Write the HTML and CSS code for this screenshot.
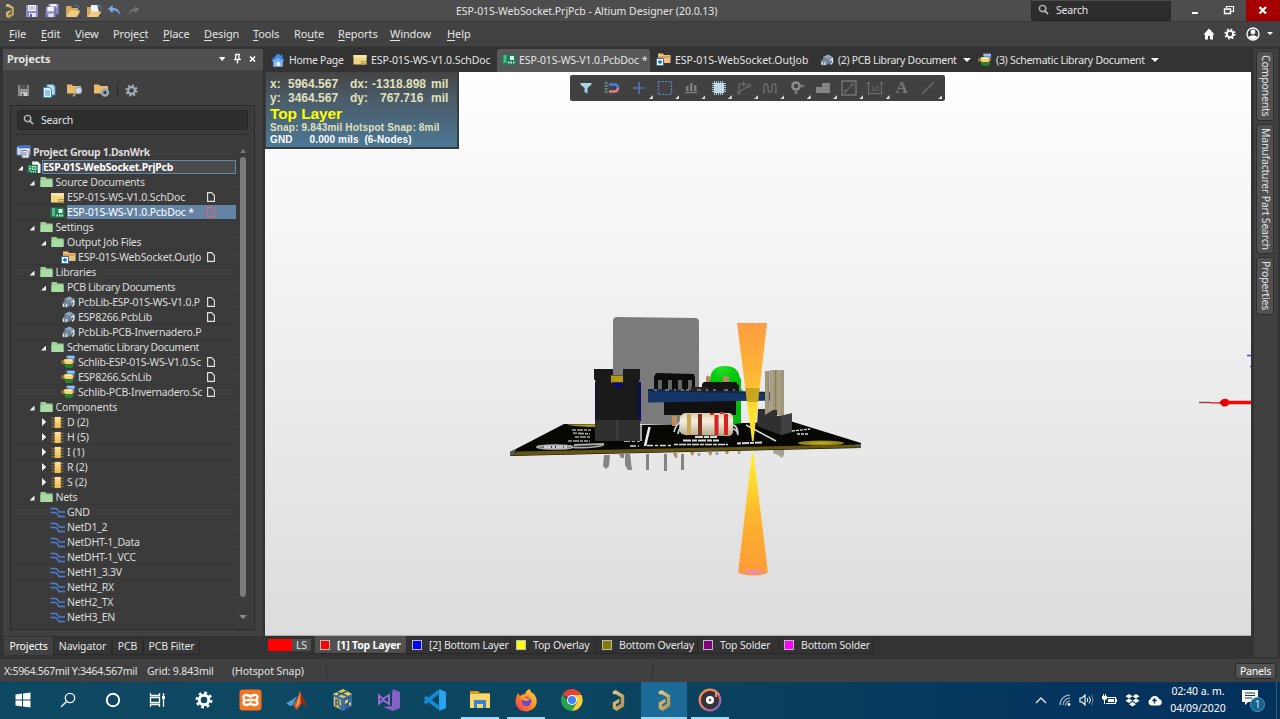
FILE: index.html
```html
<!DOCTYPE html>
<html lang="en">
<head>
<meta charset="utf-8">
<title>ESP-01S-WebSocket.PrjPcb - Altium Designer (20.0.13)</title>
<link rel="stylesheet" href="styles.css">
</head>
<body>
<svg class="sprite" width="0" height="0">
  <defs>
    <linearGradient id="gold" x1="0" y1="0" x2="1" y2="1"><stop offset="0" stop-color="#e8cf8e"/><stop offset="1" stop-color="#a98a4a"/></linearGradient>
    <linearGradient id="fox" x1="1" y1="0" x2="0" y2="1"><stop offset="0" stop-color="#ffe24a"/><stop offset=".5" stop-color="#ff8a1f"/><stop offset="1" stop-color="#f0305e"/></linearGradient>
    <linearGradient id="ring" x1="0" y1="0" x2="1" y2="1"><stop offset="0" stop-color="#ff9a3c"/><stop offset=".5" stop-color="#e8747c"/><stop offset="1" stop-color="#6a5be0"/></linearGradient>
    <linearGradient id="compfill" x1="0" y1="0" x2="0" y2="1"><stop offset="0" stop-color="#ffe3a0"/><stop offset="1" stop-color="#efb850"/></linearGradient>
  </defs>
  <symbol id="altium" viewBox="0 0 20 24"><path d="M4 5.500V2.500L7 1L16 6.500V18L8 23L4 20.500V14L11 10V14L7.500 16V18.500L12.500 15.500V8.500L7 5.500Z" fill="url(#gold)"/></symbol>
  <symbol id="save" viewBox="0 0 14 14"><path d="M1 1h12v12H1z" fill="#8d88c9"/><path d="M3 1h8v6H3z" fill="#f3f3fa"/><path d="M4 3h6M4 5h6" stroke="#a7a7bd"/><path d="M4 9h7v4H4z" fill="#e4e4f0"/><path d="M5 10h2v3H5z" fill="#5d58a0"/></symbol>
  <symbol id="savegray" viewBox="0 0 14 14"><path d="M1 1h12v12H1z" fill="#8a8a8a"/><path d="M3 1h8v5H3z" fill="#505050"/><path d="M3 6h8" stroke="#aaa"/><path d="M4 9h7v4H4z" fill="#d0d0d0"/><path d="M5 10h2v3H5z" fill="#555"/></symbol>
  <symbol id="saveall" viewBox="0 0 16 16"><path d="M4 1h11v11H4z" fill="#8d88c9"/><path d="M6 1h7v4H6z" fill="#eee"/><path d="M1 4h11v11H1z" fill="#8580c4" stroke="#55508e" stroke-width=".5"/><path d="M3 4h7v5H3z" fill="#f3f3fa"/><path d="M4 11h6v4H4z" fill="#ddd"/></symbol>
  <symbol id="open" viewBox="0 0 16 14"><path d="M1 2h5l1 2h6v3H4l-3 6z" fill="#d7aa5c"/><path d="M4.500 6.500H15.500L12 13H1z" fill="#f0cb82"/><path d="M9 2q4-2 5 2" stroke="#3d7ab0" fill="none" stroke-width="1.300"/></symbol>
  <symbol id="opendoc" viewBox="0 0 16 14"><path d="M1 3h5l1 2h6v3H4l-3 5z" fill="#d7aa5c"/><path d="M5 1h7v7H5z" fill="#eef4fa"/><path d="M4.500 7.500H15.500L12 13H1z" fill="#f0cb82"/><path d="M11 1q4 0 4 4" stroke="#3d7ab0" fill="none" stroke-width="1.300"/></symbol>
  <symbol id="undo" viewBox="0 0 16 14"><path d="M1 5L6 1V4Q13 4 14.500 12Q11 6.500 6 7V10Z" fill="#7ba4e4"/></symbol>
  <symbol id="redo" viewBox="0 0 16 14"><path d="M14 5L9 1V4Q3 4 1.500 11Q5 6.500 9 7V10Z" fill="#747474"/></symbol>
  <symbol id="mag" viewBox="0 0 12 12"><circle cx="5" cy="5" r="3.500" fill="none" stroke="currentColor" stroke-width="1.600"/><path d="M7.500 7.500L11 11" stroke="currentColor" stroke-width="1.800"/></symbol>
  <symbol id="gear" viewBox="0 0 16 16"><circle cx="8" cy="8" r="6.300" fill="none" stroke="currentColor" stroke-width="2.400" stroke-dasharray="2.470 2.470"/><circle cx="8" cy="8" r="4.200" fill="none" stroke="currentColor" stroke-width="2.600"/></symbol>
  <symbol id="copies" viewBox="0 0 14 14"><path d="M5 .5h6l2 2V11H5z" fill="#b9dcf3" stroke="#4a8fc4"/><path d="M1.500 3.500h6l2 2v8h-8z" fill="#e7f3fb" stroke="#3d86bf"/><path d="M3 7h5M3 9h5M3 11h5" stroke="#4a8fc4"/></symbol>
  <symbol id="foldmag" viewBox="0 0 16 14"><path d="M0 1h5l1 1.500h8V10H0z" fill="#e9ba69"/><circle cx="11.500" cy="7" r="3.200" fill="#c9dff0" stroke="#8fa9bd"/><path d="M9 9.500L6 13" stroke="#cfa05b" stroke-width="1.800"/></symbol>
  <symbol id="foldgear" viewBox="0 0 16 14"><path d="M0 1h5l1 1.500h8V10H0z" fill="#e9ba69"/><circle cx="11" cy="9" r="3" fill="#424242" stroke="#9aabb8" stroke-width="2.400"/></symbol>
  <symbol id="group" viewBox="0 0 15 14"><path d="M1 2h9v8H1z" fill="#dce9f7" stroke="#5b87c9"/><path d="M1 1h9v2H1z" fill="#5a86d8"/><path d="M4 1h10v9H4z" fill="#fff" stroke="#7d9cd0"/><path d="M4 .5h10v3H4z" fill="#3e70d8"/><path d="M6 5.500h5l2 2V13H6z" fill="#f2f6fb" stroke="#667"/><path d="M7 8h4M7 10h4" stroke="#67a"/></symbol>
  <symbol id="prj" viewBox="0 0 15 14"><path d="M5 .5h6l3 3V13H5z" fill="#f4f4f4"/><path d="M0 4h11v9H0z" fill="#148050"/><path d="M1.500 6h2M1.500 8h2M1.500 10h2M5 6h4v3H5z" stroke="#dff5ea" fill="none"/><path d="M4 11.500h6" stroke="#e9fff4" stroke-width="1.500" stroke-dasharray="1 1"/></symbol>
  <symbol id="folder" viewBox="0 0 13 12"><path d="M.5 1h5l1 1.500h6V11H.5z" fill="#9bcf96"/><path d="M.5 4h12v7H.5z" fill="#a9dca4"/></symbol>
  <symbol id="sch" viewBox="0 0 14 11"><path d="M.5 1h13v9.500H.5z" fill="#f1d583"/><path d="M.5 1h13v3H.5z" fill="#f8e4a4"/><path d="M8 7h5.500v3.500H8z" fill="#b99642"/><path d="M9 8.500h4" stroke="#f4dc95"/></symbol>
  <symbol id="pcb" viewBox="0 0 14 11"><path d="M0 .5h14v10H0z" fill="#14824f"/><path d="M1.500 2h3M1.500 4h3M1.500 6h3M1.500 8h3" stroke="#a4e3c4"/><path d="M8 2h4v4H8z" fill="#e9fff4"/><path d="M6 8.500h7" stroke="#d6f3e5" stroke-width="2" stroke-dasharray="1.500 1"/></symbol>
  <symbol id="outjob" viewBox="0 0 15 13"><path d="M2 .5h5l1 1.500h6.500v8H2z" fill="#efc180"/><path d="M2 3h12.500v2H2z" fill="#d99f52"/><path d="M.5 5.500h7v7h-7z" fill="#fff" stroke="#2c6fc0"/><path d="M4 7v4M2 9h4" stroke="#1b60b5" stroke-width="1.300"/></symbol>
  <symbol id="pcblib" viewBox="0 0 14 12"><path d="M3 3L8 .5L12.500 3V8L8 10.500L3 8z" fill="#6b8096"/><path d="M3 3L8 .5L12.500 3L8 5z" fill="#8ea6bb"/><path d="M1 6.500L5 5L7 7V11L3 11.500L1 10z" fill="#7a8b9b"/><path d="M9.500 6.500l3-2v4l-2 2M2 11V8M5 11V8" stroke="#e5ebef" stroke-width="1.200" fill="none"/></symbol>
  <symbol id="schlib" viewBox="0 0 14 14"><path d="M5 .5h8v5H9L5 3z" fill="#5c94e8"/><path d="M6 1h7v2H6z" fill="#9bc0f7"/><path d="M3 9h9v2l-2 2H5l-2-2z" fill="#287f33"/><path d="M3 4h7l2 2-1 3H4L2 7z" fill="#f5d26c"/><path d="M0 6h3M0 8h3M11 7h2" stroke="#c9a83e"/><path d="M4 5h6v1H4z" fill="#fff1b5"/></symbol>
  <symbol id="comp" viewBox="0 0 14 14"><path d="M.5 2.500h13M.5 5.500h13M.5 8.500h13M.5 11.500h13" stroke="#9b8636"/><path d="M4 1h6.500v12H4z" fill="url(#compfill)"/></symbol>
  <symbol id="net" viewBox="0 0 15 11"><path d="M.5 1.500H5Q7 1.500 8 3.500T10 5H15M.5 5.500H5Q7 5.500 8 8T10 9.500H15" stroke="#4f80d6" stroke-width="1.500" fill="none"/></symbol>
  <symbol id="doc" viewBox="0 0 8 10"><path d="M.6.6H4.500L7.400 3.500V9.400H.6z" fill="none" stroke="currentColor" stroke-width="1.100"/></symbol>
  <symbol id="home" viewBox="0 0 14 14"><path d="M2.500 7h9v6.500h-9z" fill="#e8f1fc"/><path d="M7 .5L.5 7l1 1.500L7 4l5.500 4.500 1-1.500-2-2V1.500H10V3z" fill="#3f8df0"/><path d="M2.500 8L7 4l4.500 4v5.500H9V9H5.500v4.500h-3z" fill="#78b2f6"/></symbol>
</svg>

<header class="titlebar">
  <div class="quick">
    <svg width="14" height="16"><use href="#altium"/></svg>
    <svg width="14" height="14"><use href="#save"/></svg>
    <svg width="16" height="15"><use href="#saveall"/></svg>
    <svg width="16" height="14"><use href="#open"/></svg>
    <svg width="16" height="14"><use href="#opendoc"/></svg>
    <svg width="15" height="13"><use href="#undo"/></svg>
    <svg width="14" height="12"><use href="#redo"/></svg>
  </div>
  <div class="title">ESP-01S-WebSocket.PrjPcb - Altium Designer (20.0.13)</div>
  <div class="top-search"><svg width="11" height="11"><use href="#mag"/></svg><span>Search</span></div>
  <div class="winctl">
    <svg width="32" height="21" viewBox="0 0 32 21"><path d="M10 13h6" stroke="#fff" stroke-width="2"/></svg>
    <svg width="32" height="21" viewBox="0 0 32 21"><path d="M12.500 8V6.500h7v5H17" fill="none" stroke="#fff" stroke-width="1.200"/><path d="M10.500 9h6v4.500h-6z" fill="none" stroke="#fff" stroke-width="1.400"/></svg>
    <div class="close"><svg width="34" height="21" viewBox="0 0 34 21"><path d="M13.500 7l6.500 6.500M20 7l-6.500 6.500" stroke="#fff" stroke-width="2.200"/></svg></div>
  </div>
</header>

<nav class="menubar">
  <div class="menus">
    <span class="m-file"><u>F</u>ile</span><span class="m-edit"><u>E</u>dit</span><span class="m-view"><u>V</u>iew</span><span class="m-project">Proje<u>c</u>t</span><span class="m-place"><u>P</u>lace</span><span class="m-design"><u>D</u>esign</span><span class="m-tools"><u>T</u>ools</span><span class="m-route">Ro<u>u</u>te</span><span class="m-reports"><u>R</u>eports</span><span class="m-window"><u>W</u>indow</span><span class="m-help"><u>H</u>elp</span>
  </div>
  <div class="menu-right">
    <svg width="12" height="12" viewBox="0 0 12 12"><path d="M6 .5L.5 6.500H2V11.500H5V8H7V11.500H10V6.500H11.500z" fill="#fff"/></svg>
    <svg class="white" width="12" height="12"><use href="#gear"/></svg>
    <svg width="14" height="14" viewBox="0 0 14 14"><circle cx="7" cy="7" r="6" fill="none" stroke="#fff" stroke-width="1.300"/><circle cx="7" cy="5" r="2.400" fill="#fff"/><path d="M2.500 10Q7 6.500 11.500 10Q7 14.500 2.500 10" fill="#fff"/></svg>
    <i class="caret small"></i>
  </div>
</nav>

<main class="workspace">
  <aside class="projects">
    <div class="panel">
      <div class="panel-head"><b>Projects</b>
        <svg width="40" height="12" viewBox="0 0 40 12"><path d="M2 4h6.500L5.200 8z" fill="#fff"/><path d="M18 1.500h5M18.700 1.500V6M22 1.500V6.500M17 6.500h7M20.500 7v3.500" stroke="#fff" stroke-width="1.300" fill="none"/><path d="M33 3.500l5 5M38 3.500l-5 5" stroke="#fff" stroke-width="1.700"/></svg>
      </div>
      <div class="panel-tools">
        <svg width="13" height="13"><use href="#savegray"/></svg>
        <svg width="14" height="14"><use href="#copies"/></svg>
        <svg width="16" height="15"><use href="#foldmag"/></svg>
        <svg width="16" height="15"><use href="#foldgear"/></svg>
        <i class="vsep"></i>
        <svg class="steel" width="13" height="13"><use href="#gear"/></svg>
      </div>
      <div class="tree-box">
        <div class="tree-search"><svg width="11" height="11"><use href="#mag"/></svg><span>Search</span></div>
        <div class="tree-wrap">
          <div class="tree">
            <div class="row l0"><svg class="ic" width="15" height="14"><use href="#group"/></svg><b class="lb">Project Group 1.DsnWrk</b></div>
            <div class="row l1 open"><svg class="ic" width="15" height="13"><use href="#prj"/></svg><b class="lb current">ESP-01S-WebSocket.PrjPcb</b></div>
            <div class="row l2 open"><svg class="ic" width="13" height="12"><use href="#folder"/></svg><span class="lb">Source Documents</span></div>
            <div class="row l3"><svg class="ic" width="14" height="11"><use href="#sch"/></svg><span class="lb wide">ESP-01S-WS-V1.0.SchDoc</span><svg class="doc" width="8" height="10"><use href="#doc"/></svg></div>
            <div class="row l3"><svg class="ic" width="14" height="11"><use href="#pcb"/></svg><span class="lb wide selected">ESP-01S-WS-V1.0.PcbDoc *</span><svg class="doc modified" width="8" height="10"><use href="#doc"/></svg></div>
            <div class="row l2 open"><svg class="ic" width="13" height="12"><use href="#folder"/></svg><span class="lb">Settings</span></div>
            <div class="row l3 open"><svg class="ic" width="13" height="12"><use href="#folder"/></svg><span class="lb">Output Job Files</span></div>
            <div class="row l4"><svg class="ic" width="14" height="13"><use href="#outjob"/></svg><span class="lb wide">ESP-01S-WebSocket.OutJo</span><svg class="doc" width="8" height="10"><use href="#doc"/></svg></div>
            <div class="row l2 open"><svg class="ic" width="13" height="12"><use href="#folder"/></svg><span class="lb">Libraries</span></div>
            <div class="row l3 open"><svg class="ic" width="13" height="12"><use href="#folder"/></svg><span class="lb tight">PCB Library Documents</span></div>
            <div class="row l4"><svg class="ic" width="14" height="12"><use href="#pcblib"/></svg><span class="lb">PcbLib-ESP-01S-WS-V1.0.P</span><svg class="doc" width="8" height="10"><use href="#doc"/></svg></div>
            <div class="row l4"><svg class="ic" width="14" height="12"><use href="#pcblib"/></svg><span class="lb">ESP8266.PcbLib</span><svg class="doc" width="8" height="10"><use href="#doc"/></svg></div>
            <div class="row l4"><svg class="ic" width="14" height="12"><use href="#pcblib"/></svg><span class="lb">PcbLib-PCB-Invernadero.Pc</span></div>
            <div class="row l3 open"><svg class="ic" width="13" height="12"><use href="#folder"/></svg><span class="lb tight">Schematic Library Document</span></div>
            <div class="row l4"><svg class="ic" width="13" height="14"><use href="#schlib"/></svg><span class="lb">Schlib-ESP-01S-WS-V1.0.Sc</span><svg class="doc" width="8" height="10"><use href="#doc"/></svg></div>
            <div class="row l4"><svg class="ic" width="13" height="14"><use href="#schlib"/></svg><span class="lb">ESP8266.SchLib</span><svg class="doc" width="8" height="10"><use href="#doc"/></svg></div>
            <div class="row l4"><svg class="ic" width="13" height="14"><use href="#schlib"/></svg><span class="lb">Schlib-PCB-Invernadero.Sc</span><svg class="doc" width="8" height="10"><use href="#doc"/></svg></div>
            <div class="row l2 open"><svg class="ic" width="13" height="12"><use href="#folder"/></svg><span class="lb wide">Components</span></div>
            <div class="row l3 shut"><svg class="ic" width="13" height="13"><use href="#comp"/></svg><span class="lb">D (2)</span></div>
            <div class="row l3 shut"><svg class="ic" width="13" height="13"><use href="#comp"/></svg><span class="lb">H (5)</span></div>
            <div class="row l3 shut"><svg class="ic" width="13" height="13"><use href="#comp"/></svg><span class="lb">I (1)</span></div>
            <div class="row l3 shut"><svg class="ic" width="13" height="13"><use href="#comp"/></svg><span class="lb">R (2)</span></div>
            <div class="row l3 shut"><svg class="ic" width="13" height="13"><use href="#comp"/></svg><span class="lb">S (2)</span></div>
            <div class="row l2 open"><svg class="ic" width="13" height="12"><use href="#folder"/></svg><span class="lb">Nets</span></div>
            <div class="row l3"><svg class="ic" width="15" height="11"><use href="#net"/></svg><span class="lb">GND</span></div>
            <div class="row l3"><svg class="ic" width="15" height="11"><use href="#net"/></svg><span class="lb">NetD1_2</span></div>
            <div class="row l3"><svg class="ic" width="15" height="11"><use href="#net"/></svg><span class="lb">NetDHT-1_Data</span></div>
            <div class="row l3"><svg class="ic" width="15" height="11"><use href="#net"/></svg><span class="lb">NetDHT-1_VCC</span></div>
            <div class="row l3"><svg class="ic" width="15" height="11"><use href="#net"/></svg><span class="lb">NetH1_3.3V</span></div>
            <div class="row l3"><svg class="ic" width="15" height="11"><use href="#net"/></svg><span class="lb">NetH2_RX</span></div>
            <div class="row l3"><svg class="ic" width="15" height="11"><use href="#net"/></svg><span class="lb">NetH2_TX</span></div>
            <div class="row l3"><svg class="ic" width="15" height="11"><use href="#net"/></svg><span class="lb">NetH3_EN</span></div>
          </div>
          <div class="scroll"><i class="up"></i><i class="thumb"></i><i class="down"></i></div>
        </div>
      </div>
    </div>
    <div class="panel-tabs"><span class="on p1">Projects</span><span class="p2">Navigator</span><span class="p3">PCB</span><span class="p4">PCB Filter</span></div>
  </aside>

  <section class="editor">
    <div class="doc-tabs">
      <div class="dt d1"><svg width="14" height="14"><use href="#home"/></svg><span>Home Page</span></div>
      <div class="dt d2"><svg width="14" height="11"><use href="#sch"/></svg><span>ESP-01S-WS-V1.0.SchDoc</span></div>
      <div class="dt d3 on"><svg width="14" height="11"><use href="#pcb"/></svg><span>ESP-01S-WS-V1.0.PcbDoc *</span></div>
      <div class="dt d4"><svg width="15" height="13"><use href="#outjob"/></svg><span>ESP-01S-WebSocket.OutJob</span></div>
      <div class="dt d5"><svg width="14" height="12"><use href="#pcblib"/></svg><span>(2) PCB Library Document</span><i class="caret"></i></div>
      <div class="dt d6"><svg width="14" height="14"><use href="#schlib"/></svg><span>(3) Schematic Library Document</span><i class="caret"></i></div>
    </div>
    <div class="canvas">
      <svg class="scene" width="986" height="564" viewBox="265 72 986 564">
        <defs>
          <linearGradient id="cone1" x1="0" y1="0" x2="0" y2="1"><stop offset="0" stop-color="#ff9a3c"/><stop offset=".5" stop-color="#fdb92e"/><stop offset=".75" stop-color="#fde02a"/><stop offset="1" stop-color="#ffee30"/></linearGradient>
          <linearGradient id="cone2" x1="0" y1="1" x2="0" y2="0"><stop offset="0" stop-color="#fd9a36"/><stop offset=".5" stop-color="#fdb52e"/><stop offset=".8" stop-color="#fde02a"/><stop offset="1" stop-color="#ffee30"/></linearGradient>
          <linearGradient id="res" x1="0" y1="0" x2="0" y2="1"><stop offset="0" stop-color="#d9cdb4"/><stop offset=".35" stop-color="#f7efe0"/><stop offset="1" stop-color="#b5a88f"/></linearGradient>
          <radialGradient id="led" cx=".4" cy=".15" r=".8"><stop offset="0" stop-color="#25e025"/><stop offset=".4" stop-color="#09cf10"/><stop offset="1" stop-color="#08b80e"/></radialGradient>
        </defs>
        <g fill="#858585">
          <path d="M604 455h6l-1 11-3 3-3-3zM619 454h5v4h-3zM625 454h5l2 16h-4l-3-5zM646 454h3v16h-3zM664 454h3v17h-3zM681 454h3v16h-3z"/>
          <path d="M773 449h11v6l-2 3-4-3-5-2z" fill="#a5a197"/>
        </g>
        <path d="M673 453h4v3l-2 2zM690 452h4v2l-2 2zM708 452h4v2l-2 2zM725 451h4l-1 3h-2z" fill="#b98b52"/>
        <path d="M676 455v3M699 453v3M717 452v3M739 451v3" stroke="#9a9ca8" stroke-width="2.500"/>
        <path d="M613 424V321q0-4 4-4l78 1q4 0 4 4V424z" fill="#7b7b7b"/>
        <path d="M510 452L564 424L640 425L746 423L790 421L861 443V448L510 456z" fill="#070704"/>
        <path d="M517 451.500L861 444.500V447.500L514 455.500z" fill="#625515"/>
        <path d="M510 452l6-3-1 6-5 1zM854 445l7-1v4l-5-1z" fill="#57574d"/>
        <path d="M568 424.500H598V427Q580 427 568 425z" fill="#a79719"/>
        <ellipse cx="821" cy="443" rx="23" ry="2.600" fill="#998817"/><ellipse cx="821" cy="442.800" rx="12" ry="1.300" fill="#b7a71c"/>
        <g stroke="#d9d9d9" fill="none" stroke-width="1.300">
          <path d="M572 430h19M573 433l17 1M575 437h15M568 441h22" stroke-dasharray="4 1 6 1 3 1" stroke="#a5a5a0" stroke-width="1.700"/>
          <ellipse cx="555" cy="447" rx="18" ry="1.800" stroke-width="2" stroke="#aaa"/>
          <path d="M544 447h24" stroke-width="3" stroke-dasharray="7 1 3 1" stroke="#cacaca"/>
          <path d="M574 447.500q18 1 30-2.500M574 445l30-1" stroke="#aaa" stroke-width="1.800"/>
          <path d="M649.500 427L645 446" stroke-width="2.500" stroke="#f2f2f2"/><path d="M641 424v17" stroke-width="1.500"/>
          <path d="M624 441h16M630 446h9M647 445.500h25" stroke-dasharray="6 2 3 2" stroke-width="1.600"/>
          <path d="M683 440.500h36M695 437h22" stroke-dasharray="8 1 5 1" stroke-width="2"/>
          <path d="M674 444.500h54" stroke-dasharray="4 1 7 1"/>
          <path d="M746 425L776 441" stroke-width="1.600"/>
          <path d="M737 443.500l26-1" stroke-dasharray="4 1 7 1" stroke-width="2"/>
          <path d="M792 431l18-2M797 434h12" stroke-dasharray="3 1"/>
        </g>
        <path d="M716 425V379A15 13 0 0 1 741 379V423l-6 1z" fill="#08b80e"/>
        <path d="M710 381Q710 366 725 366T740 381V390H710z" fill="url(#led)"/>
        <path d="M706 377q2-3 4 0v8h-4zM723 377q3-3 6 0v9h-6z" fill="#b98961"/>
        <path d="M672 416h5v10h-5z" fill="#c08f58"/>
        <path d="M664 401h72v14H664z" fill="#111"/>
        <path d="M654 377l2-4 38 1 1 4v12H654z" fill="#0d0d0d"/>
        <path d="M658 380h4v10h-4zM668 380h4v10h-4zM678 380h4v10h-4zM688 380h4v10h-4z" fill="#666"/>
        <path d="M648 389l128 3v8.500L735 401l-87 1.500z" fill="#143566"/><path d="M648 389.500l128 3v1.500l-128-3z" fill="#0c2448"/>
        <path d="M702 384l2-2h32l3 4v5h-37z" fill="#151515"/><path d="M691 387h18v4h-18z" fill="#262423"/>
        <path d="M654 390h30M686 390h60" stroke="#8d8575" stroke-width="1.600" stroke-dasharray="3 8 4 5 2 5"/>
        <path d="M595 382h46v39h-46z" fill="#090979"/>
        <path d="M594 369h19v6h10v-6h17v10l-1 2v40h-43.500v-40l-1.500-2z" fill="#1a1a1a"/>
        <path d="M611 375.500h12v7h-12z" fill="#b69a0b"/><path d="M613 382.500h10q-1 5-5 5t-5-5z" fill="#06067f"/>
        <path d="M595 420h45v21h-45z" fill="#303030"/><path d="M617 420v20" stroke="#3d3d3d" stroke-width="2"/>
        <path d="M681 422q-5 2-7 10M684 425q-5 2-6 9M732 425q5 0 6 8M730 429q7-1 8 6" fill="none" stroke="#c7cad3" stroke-width="1.800"/>
        <path d="M680 417q2-4 6-4h44q4 2 3 9v9q0 5-5 5l-39-1q-8 1-10-5z" fill="url(#res)"/>
        <path d="M687 414h4v21h-4z" fill="#c9a955"/><path d="M698 414h4v21h-4z" fill="#823018"/><path d="M714.500 415h4v20h-4zM724 414h4v21h-4zM710 413h4v2h-4zM720 412h4v2h-4z" fill="#db211d"/>
        <path d="M765 371h4v44h-4zM770 370h5v45h-5zM776 370h8v45h-8z" fill="#a0967a"/><path d="M769 371v44M775.500 370v44" stroke="#877d64"/><path d="M772 370v44M779 370v44" stroke="#b9af92"/>
        <path d="M758 409l7 0v6l8-5h4v6l15-2v18l-11 3-24-9z" fill="#303032"/><path d="M792 413v19l-11 3v-19z" fill="#414144"/>
        <path d="M737 323h30L753.500 441h-1.500z" fill="url(#cone1)" opacity=".97"/><path d="M745 388h15l-2 14h-10z" fill="#a08c11" opacity=".55"/>
        <path d="M752 453h1.500L767.500 569v3q-14 6-29 0v-3z" fill="url(#cone2)"/><ellipse cx="753" cy="572" rx="14.500" ry="3.500" fill="#f49a58"/><ellipse cx="753" cy="572" rx="8" ry="2.500" fill="#f58c92"/>
        <path d="M1199 402.500h11" stroke="#8b4940" stroke-width="1.500"/><path d="M1210 402.800h12" stroke="#e33" stroke-width="1.500"/><path d="M1219 402.500l4-3.500q6-1 6 3.500t-6 4z" fill="#e40000"/><path d="M1226 402.500h25" stroke="#f00" stroke-width="3.500"/>
        <path d="M1247 355.500h4M1250 366.500h1" stroke="#4545df" stroke-width="1.300"/>
      </svg>
      <div class="hud">
        <div class="xy"><span class="c1">x:</span><span class="c2">5964.567</span><span class="c3">dx:</span><span class="c4">-1318.898</span><span class="c5">mil</span></div>
        <div class="xy"><span class="c1">y:</span><span class="c2">3464.567</span><span class="c3">dy:</span><span class="c4 in">767.716</span><span class="c5">mil</span></div>
        <div class="layer">Top Layer</div>
        <div class="snap">Snap: 9.843mil Hotspot Snap: 8mil</div>
        <div class="gnd"><span>GND</span><span>0.000 mils&nbsp; (6-Nodes)</span></div>
      </div>
      <div class="active-bar">
        <div class="tb nc"><svg viewBox="0 0 16 16"><path d="M2.500 3h11v1.500L9.500 8v5.500L6.500 12V8L2.500 4.500z" fill="#a9d5e6"/></svg></div>
        <div class="tb nc"><svg viewBox="0 0 16 16"><path d="M1 3h3M1 6h3M1 9h3M1 12h3" stroke="#6b9b97" stroke-width="1.800" stroke-dasharray="1.500 1"/><path d="M5 4.500h5.500a3.500 3.500 0 0 1 3.500 3.500" stroke="#4e7be0" stroke-width="2.600" fill="none"/><path d="M5 11.500h5.500A3.500 3.500 0 0 0 14 8" stroke="#e07e89" stroke-width="2.600" fill="none"/></svg></div>
        <div class="tb"><svg viewBox="0 0 16 16"><path d="M8 2v12M2 8h12" stroke="#5e88dc" stroke-width="1.200"/></svg></div>
        <div class="tb"><svg viewBox="0 0 16 16"><path d="M1.500 1.500h13v13h-13z" stroke="#5e88dc" stroke-width="1.200" stroke-dasharray="2 1.300" fill="none"/></svg></div>
        <div class="tb"><svg viewBox="0 0 16 16"><path d="M2 12.500h12" stroke="#7c7c7c" stroke-width="1.500"/><path d="M3 6h2.500v5H3zM7 3h2.500v8H7zM11 5h2.500v6H11z" fill="#7c7c7c"/></svg></div>
        <div class="tb sep"><svg viewBox="0 0 16 16"><path d="M2 3v10M14 3v10M3 2h10M3 14h10" stroke="#a5cbd9" stroke-width="2" stroke-dasharray="1 1"/><path d="M3 3h10v10H3z" fill="#bbdbe5"/></svg></div>
        <div class="tb"><svg viewBox="0 0 16 16"><g fill="none" stroke="#707070" stroke-width="1.200"><circle cx="3" cy="12.500" r="1.500"/><circle cx="13" cy="5.500" r="1.500"/><path d="M4 11L12 6.500M3 10V4h6M7 2l2 2-2 2"/></g></svg></div>
        <div class="tb"><svg viewBox="0 0 16 16"><path d="M2 11V7q0-3 2-3t2 3v2q0 3 2 3t2-3V7q0-3 2-3t2 3v4" fill="none" stroke="#707070" stroke-width="1.300"/><circle cx="2" cy="12" r="1" fill="none" stroke="#707070"/><circle cx="14" cy="12" r="1" fill="none" stroke="#707070"/></svg></div>
        <div class="tb"><svg viewBox="0 0 16 16"><circle cx="7" cy="6" r="3.500" fill="none" stroke="#8d8d8d" stroke-width="2.600"/><path d="M10 6h5M7 10v4" stroke="#777" stroke-width="2.500"/></svg></div>
        <div class="tb"><svg viewBox="0 0 16 16"><path d="M1 13V7h6V3h8v10z" fill="#858585"/></svg></div>
        <div class="tb"><svg viewBox="0 0 16 16"><path d="M1 1h14v14H1z" fill="none" stroke="#767676" stroke-width="1.400"/><path d="M5 11l6-6" stroke="#767676"/><circle cx="4.500" cy="11.500" r="1.200" fill="none" stroke="#767676"/><circle cx="11.500" cy="4.500" r="1.200" fill="none" stroke="#767676"/></svg></div>
        <div class="tb"><svg viewBox="0 0 16 16"><path d="M1.500 2v12.500M14.500 2v12.500M1.500 13.500h13M0 4l1.500-2L3 4M13 4l1.500-2L16 4" fill="none" stroke="#707070"/><text x="4" y="11" class="num">10</text></svg></div>
        <div class="tb nc"><span class="bigA">A</span></div>
        <div class="tb"><svg viewBox="0 0 16 16"><path d="M2 14L14 2" stroke="#707070" stroke-width="1.300"/></svg></div>
      </div>
    </div>
    <div class="layers">
      <div class="ls"><i></i><span>LS</span></div>
      <div class="ly y1 on"><i class="red"></i><b>[1] Top Layer</b></div>
      <div class="ly y2"><i class="blue"></i><span>[2] Bottom Layer</span></div>
      <div class="ly y3"><i class="yellow"></i><span>Top Overlay</span></div>
      <div class="ly y4"><i class="olive"></i><span>Bottom Overlay</span></div>
      <div class="ly y5"><i class="purple"></i><span>Top Solder</span></div>
      <div class="ly y6"><i class="magenta"></i><span>Bottom Solder</span></div>
    </div>
  </section>

  <aside class="side-tabs"><span class="s1">Components</span><span class="s2">Manufacturer Part Search</span><span class="s3">Properties</span></aside>
</main>

<footer class="status"><span class="st1">X:5964.567mil Y:3464.567mil</span><span class="st2">Grid: 9.843mil</span><span class="st3">(Hotspot Snap)</span><i class="a"></i><i class="b"></i><span class="panels">Panels</span></footer>

<div class="taskbar">
  <div class="apps">
    <div class="ap w"><svg width="16" height="16" viewBox="0 0 16 16"><path d="M.5 2.500L7 1.600V7.500H.5zM8 1.400L15.500.5v7H8zM.5 8.500H7v5.900L.5 13.500zM8 8.500h7.500v7L8 14.600z" fill="#fff"/></svg></div>
    <div class="ap w"><svg width="16" height="16" viewBox="0 0 16 16"><circle cx="10" cy="6" r="4.700" fill="none" stroke="#fff" stroke-width="1.300"/><path d="M6.500 9.500L1 15" stroke="#fff" stroke-width="1.500"/></svg></div>
    <div class="ap w"><svg width="16" height="16" viewBox="0 0 16 16"><circle cx="8" cy="8" r="6.200" fill="none" stroke="#fff" stroke-width="1.900"/></svg></div>
    <div class="ap w last"><svg width="18" height="16" viewBox="0 0 18 16"><path d="M1.500 1v2.500h9V1M1.500 5.500h9v5h-9zM1.500 15v-2.500h9V15M14.500 1v14" fill="none" stroke="#fff" stroke-width="1.300"/><path d="M13 4h3v3h-3z" fill="#fff"/></svg></div>
    <div class="ap"><svg class="white" width="18" height="18"><use href="#gear"/></svg></div>
    <div class="ap"><svg width="23" height="22" viewBox="0 0 23 22"><rect x=".5" y=".5" width="22" height="21" rx="3" fill="#f37623"/><path d="M7.500 6Q4 6 4.500 9T7.500 11Q4 12 4.500 14t3 2Q11 16 11.500 13.500 12 16 15.500 16q3.500 0 3-2.500T15.500 11Q19 10.500 18.500 8T15.500 6Q12 6 11.500 8.500 11 6 7.500 6zM8 11h7" fill="none" stroke="#fff" stroke-width="2.300"/></svg></div>
    <div class="ap"><svg width="21" height="21" viewBox="0 0 21 21"><path d="M0 13l6-3 5-4-4 9-3 1z" fill="#4b9ed4"/><path d="M7 15Q11 10 14 1q4 9 7 16-4-4-6-3-2 4-5 6-1-4-3-5z" fill="#d6512b"/><path d="M14 1Q12 11 9.500 17q2 0 4-4z" fill="#f4a34d"/><path d="M14 1q2 10 1 13 3 0 6 3z" fill="#8e2718"/></svg></div>
    <div class="ap"><svg width="21" height="22" viewBox="0 0 21 22"><path d="M1 5L11 0l9 5v12l-9 5-10-5z" fill="#386da8"/><path d="M1 5l10 4 9-4-9-5z" fill="#eccb44"/><path d="M5 3l10 4M15 2L5 7M13 11l6-3M13 16l6-3M16 8v11M13 20l6-3" stroke="#2b5c94" stroke-width="1.500"/><path d="M2 8l7 3v9l-7-3z" fill="#f2cb39"/><path d="M4 10v7M4 11q5 0 2 4l3 4" fill="none" stroke="#315f98" stroke-width="1.600"/><path d="M13 12l3-2v3l-3 2zM17 14l2-1v3l-2 1z" fill="#e9d153"/></svg></div>
    <div class="ap"><svg width="23" height="22" viewBox="0 0 23 22"><path d="M16 0l7 3v16l-7 3-10-4 9-1V4z" fill="#8661c5"/><path d="M2 6.500l4 3.500 6-4v9l-6-4-4 3.500z" fill="none" stroke="#9a6cd3" stroke-width="2"/></svg></div>
    <div class="ap"><svg width="23" height="22" viewBox="0 0 23 22"><path d="M16 0l7 3v16l-7 3z" fill="#29a4ee"/><path d="M2 8l14 11M1.500 14L16 2.500" stroke="#158bd4" stroke-width="3.600"/></svg></div>
    <div class="ap run"><svg width="22" height="18" viewBox="0 0 22 18"><path d="M1 0h8l2 2h10v15H1z" fill="#d99b21"/><path d="M1 3h20v14H1z" fill="#fbd66c"/><path d="M5 9h12v8h-3v-4H8v4H5z" fill="#3686cf"/><path d="M9 13h4v4H9z" fill="#fbd66c"/></svg></div>
    <div class="ap run"><svg width="23" height="23" viewBox="0 0 23 23"><path d="M3 4l2 3q2-2 5-2 1-4 5-5 0 3 4 5 5 7 1 13-7 7-15 3-6-5-4-12 1-3 2-5z" fill="url(#fox)"/><circle cx="11.500" cy="12.500" r="4.800" fill="#7344cf"/><path d="M5 7q4-1 6 2 5-1 3 2-3 2-6 0-2-1-3-4z" fill="#ff9a28"/></svg></div>
    <div class="ap"><svg width="22" height="22" viewBox="0 0 22 22"><path d="M11 11L1.500 5.500A11 11 0 0 1 20.500 5.500z" fill="#e14436"/><path d="M11 11h-5L1.500 5.500A11 11 0 0 0 11 22l5-9z" fill="#2ba14b"/><path d="M11 6h9.500A11 11 0 0 1 11 22l5-9z" fill="#fdcd3b"/><circle cx="11" cy="11" r="5" fill="#fff"/><circle cx="11" cy="11" r="4" fill="#4285f4"/></svg></div>
    <div class="ap"><svg width="19" height="23"><use href="#altium"/></svg></div>
    <div class="ap run act"><svg width="19" height="23"><use href="#altium"/></svg></div>
    <div class="ap run"><svg width="24" height="24" viewBox="0 0 24 24"><circle cx="12" cy="12" r="10.300" fill="#36343b" stroke="url(#ring)" stroke-width="2.200"/><circle cx="12" cy="12" r="4" fill="#fff"/><circle cx="12" cy="12" r="1.300" fill="#555"/><path d="M18 9V4l3 3" stroke="#ee8a6a" stroke-width="2" fill="none"/></svg></div>
  </div>
  <div class="tray">
    <svg width="12" height="8" viewBox="0 0 12 8"><path d="M1 7l5-5 5 5" fill="none" stroke="#eee" stroke-width="1.300"/></svg>
    <svg class="wifi" width="12" height="12" viewBox="0 0 12 12"><g fill="none" stroke="#a7bed0" stroke-width="1.200"><path d="M1 11A10 10 0 0 1 11 1M4 11a7 7 0 0 1 7-7M6.500 11.500A4.500 4.500 0 0 1 11 7"/></g><circle cx="10" cy="10.500" r="1.400" fill="#fff"/></svg>
    <svg class="spk" width="15" height="12" viewBox="0 0 15 12"><path d="M1 4h2l3-3v10L3 8H1z" fill="none" stroke="#fff" stroke-width="1.100"/><path d="M8 4q1.500 2 0 4M10 2.500q3 3.500 0 7" fill="none" stroke="#fff"/><path d="M12 1q4 5 0 10" fill="none" stroke="#6f8fac"/></svg>
    <svg class="bat" width="15" height="12" viewBox="0 0 15 12"><path d="M5 3.500h8.500v6H4" fill="none" stroke="#fff" stroke-width="1.200"/><path d="M6 5h6v3H6zM14 5h1v3h-1zM0 2h5v3L3 6v4H2V6L0 5zM1 0h1v2H1zM3 0h1v2H3z" fill="#fff"/></svg>
    <svg class="drop" width="15" height="13" viewBox="0 0 15 13"><path d="M4 0L.5 2.200 4 4.400l3.500-2.200zM11 0L7.500 2.200 11 4.400l3.500-2.200zM4 4.600L.5 6.800 4 9l3.500-2.200zM11 4.600L7.500 6.800 11 9l3.500-2.200zM7.500 8L4 10.200l3.500 2.300 3.500-2.300z" fill="#fff"/></svg>
    <svg class="cloud" width="15" height="11" viewBox="0 0 15 11"><path d="M4 10.500A3.500 3.500 0 0 1 3.500 4 4.500 4.500 0 0 1 12 4a3.300 3.300 0 0 1 0 6.500z" fill="#fff"/><path d="M7.500 3.500v5M5.500 6l2-2 2 2" stroke="#123c60" stroke-width="1.500" fill="none"/></svg>
    <div class="clock"><span>02:40 a. m.</span><span>04/09/2020</span></div>
    <div class="note"><svg width="16" height="15" viewBox="0 0 16 15"><path d="M0 0h16v12H6l-3 3v-3H0z" fill="#fff"/><path d="M3 3h10M3 5.500h10M3 8h7" stroke="#0b3b60" stroke-width="1.200"/></svg><span class="badge">1</span></div>
  </div>
  <i class="desk"></i>
</div>
</body>
</html>
```
FILE: styles.css
```css
* { box-sizing: border-box; }
body { margin: 0; width: 1280px; height: 719px; overflow: hidden; display: flex; flex-direction: column; background: #333; color: #e4e4e4; font-family: "Noto Sans", "Open Sans", sans-serif; font-size: 10.5px; white-space: nowrap; }
svg { display: block; flex: none; }
.sprite { position: absolute; }
.white { color: #fff; }
.steel { color: #9fb0b8; }
u { text-underline-offset: 2px; }

.titlebar { height: 21px; flex: none; display: flex; align-items: center; background: #4d4d4d; }
.quick { width: 456px; display: flex; align-items: center; gap: 5px; padding-left: 3px; }
.quick svg:nth-child(2) { margin-left: 3px; }
.title { width: 575px; font-size: 10.5px; letter-spacing: -.05px; }
.top-search { width: 140px; height: 20px; display: flex; align-items: center; gap: 7px; padding: 0 6px 1px; border: 1px solid #262626; border-top: 0; border-radius: 0 0 3px 3px; background: #2d2d2d; letter-spacing: -.2px; }
.top-search svg, .tree-search svg { color: #b5b5b5; }
.winctl { margin-left: auto; display: flex; }
.close { background: #a40000; }

.menubar { height: 26px; flex: none; display: flex; align-items: center; justify-content: space-between; background: #424242; border-top: 1px solid #383838; border-bottom: 1px solid #383838; font-size: 11px; letter-spacing: -.1px; padding-bottom: 1px; }
.menus { display: flex; padding-left: 9px; }
.m-file { width: 32px; } .m-edit { width: 34px; } .m-view { width: 38px; } .m-project { width: 50px; } .m-place { width: 41px; } .m-design { width: 49px; } .m-tools { width: 41px; } .m-route { width: 44px; } .m-reports { width: 52px; } .m-window { width: 57px; }
.menu-right { display: flex; align-items: center; gap: 9.500px; padding-right: 7px; }
.caret { border: 4px solid transparent; border-top-color: #fff; border-bottom: 0; }
.caret.small { border-width: 3px 3px 0; margin-left: -2px; }

.workspace { height: 612px; flex: none; display: flex; }
.projects { width: 265px; padding: 2px 2px 0 3px; }
.panel { height: 587px; background: #404040; display: flex; flex-direction: column; }
.panel-head { height: 21px; display: flex; align-items: center; justify-content: space-between; padding: 0 6px 2px 4px; background: #505050; font-size: 11px; letter-spacing: -.1px; }
.panel-tools { height: 35px; display: flex; align-items: center; gap: 12px; padding: 6px 0 0 14px; }
.panel-tools svg:nth-child(2) { margin-right: -1px; }
.panel-tools svg:nth-child(4) { margin-left: -1px; }
.panel-tools .steel { margin-left: -5px; }
.vsep { width: 1px; height: 15px; background: #2b2b2b; margin-left: -5px; }
.tree-box { margin: 0 8px 0 7px; height: 525px; border: 1px solid #292929; background: #3b3b3b; }
.tree-search { height: 20px; margin: 4px 6px 0 6px; display: flex; align-items: center; gap: 7px; padding: 0 0 1px 5px; border: 1px solid #262626; border-radius: 3px; background: #2e2e2e; letter-spacing: -.2px; }
.tree-wrap { height: 490px; margin: 4px 5px 0; border-top: 1px solid #2c2c2c; display: flex; padding-top: 10px; }
.tree { width: 220px; }
.row { height: 15px; display: flex; align-items: center; border-bottom: 1px solid #373737; overflow: hidden; line-height: 14px; letter-spacing: -.24px; }
.row::before { content: ""; flex: none; width: 7px; height: 6px; margin-right: 5px; margin-top: 2px; }
.row.open::before { background: #f3f3f3; clip-path: polygon(100% 0, 100% 100%, 0 100%); width: 5px; height: 5px; margin-left: 1px; margin-right: 6px; }
.row.shut::before { background: #f3f3f3; clip-path: polygon(0 0, 70% 50%, 0 100%); height: 8px; margin-top: 0; margin-left: 2px; width: 6px; margin-right: 4px; }
.row.l0::before { display: none; }
.l1 { padding-left: 1px; } .l2 { padding-left: 12.500px; } .l3 { padding-left: 24px; } .l4 { padding-left: 35px; }
.row .ic { width: 15px; margin-right: 2px; margin-left: -2px; }
.row.l0 .ic { margin-left: 0; }
.row.l1 .ic { margin-right: 0; }
.lb { flex: 1; min-width: 0; height: 15px; overflow: hidden; color: #dcdcdc; }
.l0 .lb { letter-spacing: -.34px; }
.lb.wide { letter-spacing: -.16px; }
.lb.tight { letter-spacing: -.38px; }
.row .doc { margin: 0 21px 0 -29px; flex: none; color: #e5e5e5; position: relative; }
.l4 .lb { margin-right: 34px; }
.l4 .doc { margin: 0 21px 0 -29px; }
.row .current { border: 1px solid #6187b0; background: #4a4a4a; color: #fff; line-height: 12px; height: 14px; letter-spacing: -.27px; }
.selected { background: #6384a4; color: #fff; }
.row .doc.modified { color: #f0605c; }
.scroll { width: 14px; display: flex; flex-direction: column; align-items: center; }
.scroll .up { border: 3px solid transparent; border-bottom: 4px solid #777; border-top: 0; margin-top: 4px; }
.scroll .thumb { width: 6px; height: 440px; margin-top: 4px; border-radius: 3px; background: #7b7b7b; }
.scroll .down { border: 4px solid transparent; border-top-color: #8a8a8a; border-bottom: 0; margin-top: 18px; }
.panel-tabs { display: flex; padding: 1px 0 0 1px; letter-spacing: -.15px; }
.panel-tabs span { height: 18px; line-height: 16px; text-align: center; background: #353535; border: 1px solid #2b2b2b; }
.panel-tabs .on { background: #424242; color: #fff; border-color: #424242; }
.p1 { width: 49px; } .p2 { width: 59px; } .p3 { width: 31px; } .p4 { width: 57px; }

.editor { width: 986px; }
.doc-tabs { height: 25px; display: flex; padding-top: 2px; align-items: flex-start; letter-spacing: -.1px; }
.dt { height: 21px; display: flex; align-items: center; gap: 4px; padding-left: 5px; }
.dt .caret { margin-left: 2px; }
.dt.on { background: #585858; border-radius: 3px 3px 0 0; height: 23px; padding-bottom: 2px; }
.d1 { width: 82px; padding-left: 6px; letter-spacing: -.3px; } .d2 { width: 150px; padding-left: 6px; } .d3 { width: 153px; gap: 3px; } .d4 { width: 167px; padding-left: 6px; letter-spacing: 0; } .d5 { width: 159px; padding-left: 3px; letter-spacing: -.32px; } .d6 { padding-left: 2px; letter-spacing: -.27px; }
.canvas { height: 564px; position: relative; background: linear-gradient(#fff, #f8f8f8 20%, #eee 50%, #dcdcdc); border-bottom: 1px solid #a9b0a9; }
.hud { position: absolute; left: 0; top: 0; width: 194px; height: 77px; padding: 5px 0 0 4px; background: linear-gradient(#444, #4a5b67 35%, #4d7897); border: solid #3a3d40; border-width: 0 2px 2px 1px; color: #e1e1bd; font: bold 12px/14px "Liberation Sans", sans-serif; }
.xy { display: flex; }
.c1 { width: 18px; } .c2 { width: 62px; } .c3 { width: 22px; } .c4 { width: 59px; } .c4.in { padding-left: 8px; }
.layer { color: #ff0; font-size: 15.500px; line-height: 17px; letter-spacing: -.1px; }
.snap { font-size: 10px; line-height: 12px; letter-spacing: .17px; }
.gnd { font-size: 10px; line-height: 11px; color: #fff; display: flex; gap: 17px; letter-spacing: .12px; }
.active-bar { position: absolute; left: 305px; top: 3px; width: 375px; height: 26px; padding-left: 3px; display: flex; align-items: center; background: #414141; border-radius: 2px; }
.tb { width: 26.300px; height: 26px; display: flex; align-items: center; justify-content: center; position: relative; }
.tb svg { width: 16px; height: 16px; }
.tb::after { content: ""; position: absolute; right: -1px; bottom: 2px; width: 4px; height: 4px; background: #ddd; clip-path: polygon(100% 0, 100% 100%, 0 100%); }
.tb.nc::after { display: none; }
.tb.sep { padding-left: 2px; }
.num { font: 7px "Liberation Sans", sans-serif; fill: #777; letter-spacing: 0; }
.bigA { color: #777; font: bold 17px "Liberation Serif", serif; }
.layers { height: 22px; display: flex; padding: 0 0 0 3px; letter-spacing: -.17px; }
.ls { width: 47px; height: 16px; display: flex; padding-top: 3px; }
.ls i { width: 24px; height: 12px; background: #f00; }
.ls span { width: 19px; height: 12px; line-height: 12px; background: #505050; text-align: center; }
.ly { height: 18px; display: flex; align-items: center; gap: 7px; padding-left: 5px; border-right: 1px solid #292929; border-bottom: 1px solid #292929; }
.ly i { width: 10px; height: 10px; flex: none; border: 1px solid #bbb; }
.ly.on { background: #505050; color: #fff; }
.y1 { width: 92px; } .y2 { width: 104px; } .y3 { width: 86px; } .y4 { width: 101px; } .y5 { width: 81px; } .y6 { width: 94px; }
.red { background: #f00; } .blue { background: #00f; } .yellow { background: #ff0; } .olive { background: #808000; } .purple { background: #800080; } .magenta { background: #f0f; }

.side-tabs { width: 24px; height: 608px; margin: 2px 0 0 3px; padding: 2px 3px 0 2px; background: #404040; display: flex; flex-direction: column; gap: 3px; letter-spacing: -.2px; }
.side-tabs span { width: 18px; writing-mode: vertical-rl; line-height: 15px; background: #515151; border: 1px solid #2d2d2d; border-radius: 3px; padding: 3px 0; }
.s1 { height: 70px; } .s2 { height: 130px; } .s3 { height: 58px; }

.status { height: 23px; flex: none; display: flex; align-items: center; background: #404040; padding: 0 4px; }
.st1 { width: 143px; letter-spacing: -.28px; } .st2 { width: 85px; letter-spacing: -.15px; } .st3 { width: 94px; letter-spacing: -.1px; }
.status i { width: 1px; height: 16px; background: #303030; }
.status .a { margin-right: 325px; }
.panels { margin-left: auto; width: 41px; height: 16px; line-height: 14px; text-align: center; border: 1px solid #2b2b2b; border-radius: 3px; background: #535353; color: #fff; letter-spacing: -.2px; }

.taskbar { height: 37px; flex: none; display: flex; background: linear-gradient(90deg, #0e4862, #0c4560 45%, #083f5d 62%, #05355f 82%, #04305c); }
.apps { display: flex; }
.ap { width: 46px; height: 37px; padding-bottom: 1px; display: flex; align-items: center; justify-content: center; }
.ap.w { width: 45px; } .ap.last { width: 46px; }
.ap.run { background: linear-gradient(#9adcf8, #9adcf8) 50% 100% / 38px 2px no-repeat; }
.ap.act { background: linear-gradient(#9adcf8, #9adcf8) 50% 100% / 46px 2px no-repeat, #1b6b96; }
.tray { display: flex; align-items: center; margin-left: auto; padding-bottom: 1px; }
.wifi { margin-left: 12px; } .spk { margin-left: 8px; } .bat { margin-left: 8px; } .drop { margin-left: 8px; } .cloud { margin-left: 7px; }
.clock { width: 66px; margin-left: 3px; display: flex; flex-direction: column; text-align: center; line-height: 17px; color: #fff; letter-spacing: -.05px; }
.note { margin-left: 11px; width: 22px; height: 20px; position: relative; }
.badge { position: absolute; left: 8px; top: 7px; width: 15px; height: 15px; border-radius: 50%; background: #11658f; border: 1px solid #4f95b8; font-size: 10px; line-height: 13px; text-align: center; }
.desk { width: 4px; margin-left: 12px; border-left: 1px solid #2f5a7a; }
```
